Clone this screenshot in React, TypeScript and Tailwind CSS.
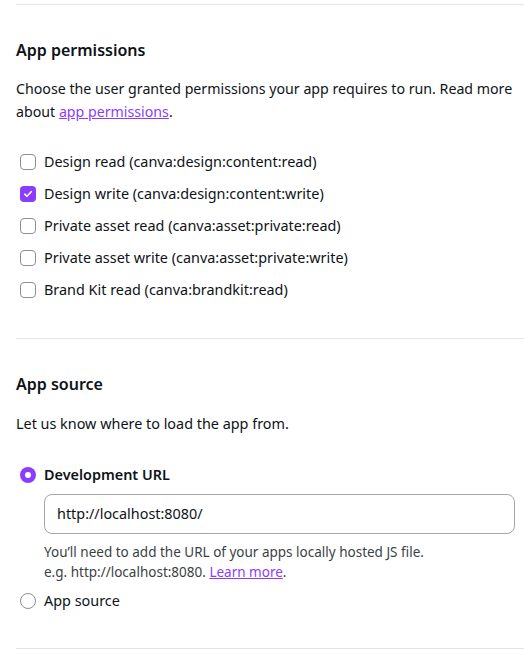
const permissions = [
  { label: "Design read (canva:design:content:read)", checked: false },
  { label: "Design write (canva:design:content:write)", checked: true },
  { label: "Private asset read (canva:asset:private:read)", checked: false },
  { label: "Private asset write (canva:asset:private:write)", checked: false },
  { label: "Brand Kit read (canva:brandkit:read)", checked: false },
];

function Checkbox({ checked }: { checked: boolean }) {
  if (checked) {
    return (
      <span className="w-4 h-4 rounded-[4px] bg-[#8b3dff] flex items-center justify-center flex-shrink-0">
        <svg width="10" height="10" viewBox="0 0 10 10" fill="none">
          <path d="M1.8 5.2l2.2 2.1 4.2-4.6" stroke="white" strokeWidth="1.6" strokeLinecap="round" strokeLinejoin="round" />
        </svg>
      </span>
    );
  }
  return <span className="w-4 h-4 rounded-[4px] border border-[#8e8f94] bg-white flex-shrink-0" />;
}

function Radio({ checked }: { checked: boolean }) {
  if (checked) {
    return (
      <span className="w-4 h-4 rounded-full bg-[#8b3dff] flex items-center justify-center flex-shrink-0">
        <span className="w-[6px] h-[6px] rounded-full bg-white" />
      </span>
    );
  }
  return <span className="w-4 h-4 rounded-full border border-[#8e8f94] bg-white flex-shrink-0" />;
}

export default function App() {
  return (
    <div
      className="bg-white text-[#0e1318] min-h-screen pl-4 overflow-hidden"
      style={{ fontFamily: '"Noto Sans", sans-serif' }}
    >
      <div className="pt-[4px] border-b border-[#e3e5e8]" />

      {/* App permissions */}
      <h2 className="mt-[33px] text-base leading-6 font-semibold">App permissions</h2>
      <p className="mt-[15px] text-[14.2px] leading-[23px] whitespace-nowrap">
        Choose the user granted permissions your app requires to run. Read more
        <br />
        about{" "}
        <a href="#" className="text-[#8b3dff] underline">
          app permissions
        </a>
        .
      </p>

      <div className="mt-[23px] flex flex-col">
        {permissions.map((p) => (
          <label key={p.label} className="h-8 flex items-center gap-2 pl-1 text-[14.4px]">
            <Checkbox checked={p.checked} />
            <span>{p.label}</span>
          </label>
        ))}
      </div>

      <div className="mt-[32px] border-b border-[#e3e5e8]" />

      {/* App source */}
      <h2 className="mt-[33px] text-base leading-6 font-semibold">App source</h2>
      <p className="mt-[16px] text-[14.4px] leading-[23px]">Let us know where to load the app from.</p>

      <div className="mt-[24px] h-8 flex items-center gap-2 pl-1">
        <Radio checked />
        <span className="text-[14.4px] font-semibold">Development URL</span>
      </div>
      <div className="mt-[3px] ml-7 mr-[9px]">
        <div className="h-10 rounded-lg border border-[#a3a6ab] flex items-center px-3 text-[14.4px]">
          http://localhost:8080/
        </div>
        <p className="mt-[8px] text-[13.5px] leading-5 text-[#3a3f45]">
          You’ll need to add the URL of your apps locally hosted JS file.
          <br />
          e.g. http://localhost:8080.{" "}
          <a href="#" className="text-[#8b3dff] underline">
            Learn more
          </a>
          .
        </p>
      </div>
      <div className="mt-[3px] h-8 flex items-center gap-2 pl-1">
        <Radio checked={false} />
        <span className="text-[14.4px]">App source</span>
      </div>

      <div className="mt-[31px] border-b border-[#e3e5e8]" />
    </div>
  );
}
